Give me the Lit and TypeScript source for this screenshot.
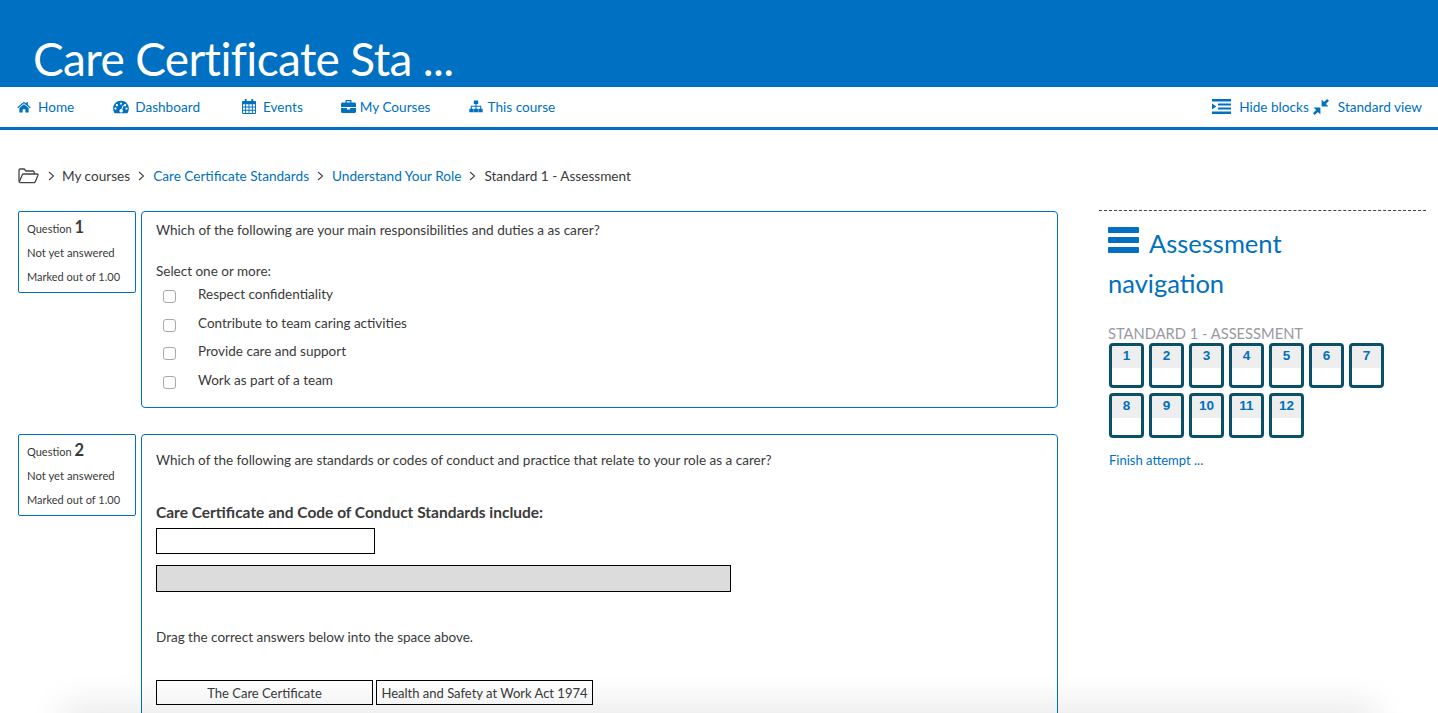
import { LitElement, html, css, svg } from "lit";
import { customElement } from "lit/decorators.js";

const ic = (vb: string, d: any, w: number, h: number) =>
  html`<svg class="ic" width=${w} height=${h} viewBox=${vb} fill="currentColor">${d}</svg>`;

const home = ic("0 0 16 14", svg`<path d="M8 0.8 L10.6 3 V1.5 H12.6 V4.7 L15.8 7.4 L15 8.4 L8 2.6 L1 8.4 L.2 7.4 Z"/><path d="M8 3.8 L13.4 8.2 V13.4 H9.6 V9.6 H6.4 V13.4 H2.6 V8.2 Z"/>`, 14, 12);
const dash = ic("0 0 18 15", svg`<path fill-rule="evenodd" d="M9 .5 C4 .5 .2 4.4 .2 9.2 C.2 11 .7 12.8 1.6 14.2 C1.8 14.5 2.1 14.6 2.4 14.6 H15.6 C15.9 14.6 16.2 14.5 16.4 14.2 C17.3 12.8 17.8 11 17.8 9.2 C17.8 4.4 14 .5 9 .5 Z M9 2.3 A1.3 1.3 0 1 1 9 4.9 A1.3 1.3 0 0 1 9 2.3 Z M4.4 4.2 A1.3 1.3 0 1 1 4.4 6.8 A1.3 1.3 0 0 1 4.4 4.2 Z M13.6 4.2 A1.3 1.3 0 1 1 13.6 6.8 A1.3 1.3 0 0 1 13.6 4.2 Z M2.8 8 A1.3 1.3 0 1 1 2.8 10.6 A1.3 1.3 0 0 1 2.8 8 Z M15.2 8 A1.3 1.3 0 1 1 15.2 10.6 A1.3 1.3 0 0 1 15.2 8 Z M11.2 5.2 L12.2 5.6 L10.4 10.2 A2 2 0 1 1 9.3 9.8 Z"/>`, 16, 14);
const cal = ic("0 0 15 16", svg`<path fill-rule="evenodd" d="M3 0 H5 V2 H10 V0 H12 V2 H14 C14.6 2 15 2.4 15 3 V15 C15 15.6 14.6 16 14 16 H1 C.4 16 0 15.6 0 15 V3 C0 2.4 .4 2 1 2 H3 Z M1 5.5 V8 H3.4 V5.5 Z M4.4 5.5 V8 H7 V5.5 Z M8 5.5 V8 H10.6 V5.5 Z M11.6 5.5 V8 H14 V5.5 Z M1 9 V11.5 H3.4 V9 Z M4.4 9 V11.5 H7 V9 Z M8 9 V11.5 H10.6 V9 Z M11.6 9 V11.5 H14 V9 Z M1 12.5 V15 H3.4 V12.5 Z M4.4 12.5 V15 H7 V12.5 Z M8 12.5 V15 H10.6 V12.5 Z M11.6 12.5 V15 H14 V12.5 Z"/>`, 14, 15);
const brief = ic("0 0 15 13", svg`<path fill-rule="evenodd" d="M4.5 2.5 V1 C4.5 .4 4.9 0 5.5 0 H9.5 C10.1 0 10.5 .4 10.5 1 V2.5 H13.5 C14.3 2.5 15 3.2 15 4 V7 H0 V4 C0 3.2 .7 2.5 1.5 2.5 Z M5.7 1.2 V2.5 H9.3 V1.2 Z"/><path d="M0 8 H6 V9.5 H9 V8 H15 V11.5 C15 12.3 14.3 13 13.5 13 H1.5 C.7 13 0 12.3 0 11.5 Z"/>`, 15, 13);
const site = ic("0 0 16 14", svg`<path d="M5.5 0 H10.5 V4 H8.6 V6 H14 V9.5 H15.6 V13.6 H10.8 V9.5 H12.8 V7.2 H8.6 V9.5 H10.4 V13.6 H5.6 V9.5 H7.4 V7.2 H3.2 V9.5 H5.2 V13.6 H.4 V9.5 H2 V6 H7.4 V4 H5.5 Z"/>`, 14, 13);
const hide = ic("0 0 19 15", svg`<path d="M0 0 H19 V2.6 H0 Z M6 4.4 H19 V6.6 H6 Z M6 8.4 H19 V10.6 H6 Z M0 12.4 H19 V15 H0 Z M0 4.6 L4.4 7.5 L0 10.4 Z"/>`, 19, 15);
const shrink = ic("0 0 16 16", svg`<path d="M8.6 .6 V7.4 H15.4 L12.9 4.9 L16 1.8 L14.2 0 L11.1 3.1 Z"/><path d="M7.4 15.4 V8.6 H.6 L3.1 11.1 L0 14.2 L1.8 16 L4.9 12.9 Z"/>`, 16, 16);
const folder = html`<svg class="folder" width="21" height="16" viewBox="0 0 21 16" fill="none" stroke="#444" stroke-width="1.3"><path d="M1 13.5 V2.2 C1 1.4 1.5 1 2.2 1 H6.2 L8 3 H15 C15.7 3 16.2 3.5 16.2 4.2 V6"/><path d="M1 14.4 L4.4 6.6 C4.6 6.2 5 6 5.4 6 H19.2 C19.9 6 20.2 6.6 20 7.2 L17.2 13.8 C17 14.3 16.6 14.6 16 14.6 H1.6"/></svg>`;
const bars = html`<svg class="bars" width="31" height="26" viewBox="0 0 31 26" fill="currentColor"><rect y="0" width="31" height="6" rx="1"/><rect y="10" width="31" height="6" rx="1"/><rect y="20" width="31" height="6" rx="1"/></svg>`;

@customElement("app-root")
export class AppRoot extends LitElement {
  static styles = css`
    :host { display: block; width: 1438px; height: 713px; overflow: hidden; position: relative; background: #fff;
      font-family: "Lato", "Noto Sans", sans-serif; font-size: 13.5px; color: #3a3a3a; }
    a { color: #0070c0; text-decoration: none; }
    .ic { display: block; flex: none; }
    .banner { height: 87px; background: #0070c2; color: #fff; box-sizing: border-box; padding: 31px 0 0 33px; overflow: hidden; }
    .banner h1 { margin: 0; font-weight: 400; font-size: 46px; letter-spacing: -0.65px; line-height: 56px; font-family: "Lato", sans-serif; }
    .nav { box-sizing: content-box; border-bottom: 3px solid #0070c2; display: flex; align-items: center; justify-content: space-between; padding: 0 16px 1px 17px; height: 39px; color: #0070c0; font-size: 13.6px; }
    .nav-l, .nav-r { display: flex; align-items: center; }
    .nav-l a { display: flex; align-items: center; }
    .nav-r a { display: flex; align-items: center; }
    .home { gap: 7px; margin-right: 39px; }
    .dashb { gap: 6px; margin-right: 42px; }
    .events { gap: 7px; margin-right: 38px; }
    .courses { gap: 4px; margin-right: 38px; }
    .course { gap: 5px; }
    .hb { gap: 8px; margin-right: 4px; }
    .sv { gap: 9px; }
    .body { display: flex; padding: 0 12px 0 18px; }
    .main { width: 1040px; flex: none; }
    .crumbs { display: flex; align-items: center; height: 20px; margin-top: 36px; font-size: 13.6px; }
    .folder { margin-right: 8px; }
    .sep { width: 23px; display: flex; justify-content: center; }
    .sep svg { display: block; }
    .sep.first { width: 8px; margin-right: 7px; }
    .q { display: flex; gap: 5px; align-items: flex-start; }
    .q1 { margin-top: 25px; }
    .q2 { margin-top: 26px; }
    .info { width: 118px; box-sizing: border-box; border: 1px solid #0070c0; border-radius: 2px; padding: 5px 8px 3px; font-size: 11.3px; line-height: 24px; flex: none; white-space: nowrap; }
    .info .n { font-weight: 700; font-size: 16.5px; }
    .info div { height: 24px; }
    .info div.top { height: 26px; margin-top: -2px; }
    .info .ql { font-size: 11px; }
    .info .m { font-size: 11px; }
    .card { width: 917px; box-sizing: border-box; border: 1px solid #0070c0; border-radius: 4px; padding: 0 14px; }
    .q1 .card { height: 197px; padding-top: 8px; }
    .q2 .card { height: 300px; }
    .line { height: 20px; line-height: 20px; white-space: nowrap; }
    .line.lead { font-size: 13.6px; }
    .line.lead2 { margin-top: 21px; }
    .line.qt { margin-top: 15px; }
    .line.bold { margin-top: 32px; font-weight: 700; font-size: 15.5px; }
    .line.dragt { margin-top: 35px; }
    .opt { display: flex; align-items: center; height: 20px; margin-top: 9px; }
    .opt.first { margin-top: 3px; }
    .opt.tight { margin-top: 8px; }
    .opt i { width: 11px; height: 11px; border: 1px solid #a9a9a9; border-radius: 3px; margin: 5px 22px 0 7px; flex: none; }
    .drop1 { width: 219px; height: 26px; margin-top: 6px; border: 1px solid #000; box-sizing: border-box; }
    .drop2 { width: 575px; height: 27px; margin-top: 11px; border: 1px solid #000; background: #dcdcdc; box-sizing: border-box; }
    .drags { display: flex; gap: 3px; margin-top: 33px; }
    .drag { width: 217px; height: 25px; border: 1px solid #000; box-sizing: border-box; line-height: 25px; font-size: 13px; text-align: center; flex: none; white-space: nowrap; }
    .side { margin-left: 41px; width: 327px; margin-top: 80px; border-top: 1px dashed #444; flex: none; box-sizing: border-box; padding-left: 9px; }
    .side h2 { margin: 0; color: #0070c0; font-weight: 400; font-size: 25.5px; line-height: 40px; padding-top: 12px; font-family: "Lato", sans-serif; }
    .side .bars { margin-right: 10px; vertical-align: 0; }
    .stitle { color: #9a9a9f; font-size: 14.7px; line-height: 18px; margin-top: 21px; text-transform: uppercase; white-space: nowrap; }
    .grid { display: grid; grid-template-columns: repeat(7, 35px); gap: 5px; margin: 1px 0 0 1px; }
    .tile { height: 45px; box-sizing: border-box; border: 3px solid #0b5069; border-radius: 4px; text-align: center; font: 700 13.5px/20px "Liberation Sans", sans-serif; color: #0070c0;
      background: linear-gradient(#eee 0, #eee 22px, #fff 22px); }
    .finish { display: block; margin: 13px 0 0 1px; line-height: 18px; font-size: 13px; }
    .veil { position: absolute; left: 70px; right: 70px; top: 716px; height: 10px; pointer-events: none;
      box-shadow: 0 0 36px 8px rgba(0,0,0,.12); }
  `;

  render() {
    const chev = html`<svg width="7" height="10" viewBox="0 0 7 10" fill="none" stroke="#444" stroke-width="1.1"><path d="M1 1 L5.5 5 L1 9"/></svg>`;
    return html`
      <div class="banner"><h1>Care Certificate Sta ...</h1></div>
      <nav class="nav">
        <div class="nav-l">
          <a class="home" href="#">${home}Home</a>
          <a class="dashb" href="#">${dash}Dashboard</a>
          <a class="events" href="#">${cal}Events</a>
          <a class="courses" href="#">${brief}My Courses</a>
          <a class="course" href="#">${site}This course</a>
        </div>
        <div class="nav-r">
          <a class="hb" href="#">${hide}Hide blocks</a>
          <a class="sv" href="#">${shrink}Standard view</a>
        </div>
      </nav>
      <div class="body">
        <div class="main">
          <div class="crumbs">
            ${folder}<span class="sep first">${chev}</span><span>My courses</span>
            <span class="sep">${chev}</span><a href="#">Care Certificate Standards</a>
            <span class="sep">${chev}</span><a href="#">Understand Your Role</a>
            <span class="sep">${chev}</span><span>Standard 1 - Assessment</span>
          </div>
          <section class="q q1">
            <div class="info">
              <div class="top"><span class="ql">Question</span> <span class="n">1</span></div><div>Not yet answered</div><div class="m">Marked out of 1.00</div>
            </div>
            <div class="card">
              <div class="line lead">Which of the following are your main responsibilities and duties a as carer?</div>
              <div class="line lead2">Select one or more:</div>
              <div class="opt first"><i></i>Respect confidentiality</div>
              <div class="opt"><i></i>Contribute to team caring activities</div>
              <div class="opt tight"><i></i>Provide care and support</div>
              <div class="opt"><i></i>Work as part of a team</div>
            </div>
          </section>
          <section class="q q2">
            <div class="info">
              <div class="top"><span class="ql">Question</span> <span class="n">2</span></div><div>Not yet answered</div><div class="m">Marked out of 1.00</div>
            </div>
            <div class="card">
              <div class="line qt">Which of the following are standards or codes of conduct and practice that relate to your role as a carer?</div>
              <div class="line bold">Care Certificate and Code of Conduct Standards include:</div>
              <div class="drop1"></div>
              <div class="drop2"></div>
              <div class="line dragt">Drag the correct answers below into the space above.</div>
              <div class="drags">
                <div class="drag">The Care Certificate</div>
                <div class="drag">Health and Safety at Work Act 1974</div>
              </div>
            </div>
          </section>
        </div>
        <aside class="side">
          <h2>${bars}Assessment<br />navigation</h2>
          <div class="stitle">Standard 1 - Assessment</div>
          <div class="grid">
            ${[1,2,3,4,5,6,7,8,9,10,11,12].map((n) => html`<a class="tile" href="#">${n}</a>`)}
          </div>
          <a class="finish" href="#">Finish attempt ...</a>
        </aside>
      </div>
      <div class="veil"></div>
    `;
  }
}
